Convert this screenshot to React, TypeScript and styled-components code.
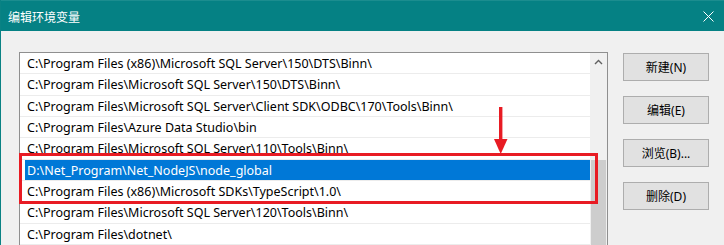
import React from "react";
import styled, { createGlobalStyle } from "styled-components";

const Global = createGlobalStyle`
  html, body { margin: 0; padding: 0; background: #f0f0f0; }
  body { width: 724px; height: 245px; overflow: hidden; }
`;

const FONT = `"Noto Sans", "Noto Sans CJK SC", sans-serif`;

const Window = styled.div`
  width: 724px;
  height: 245px;
  display: flex;
  flex-direction: column;
  background: #f0f0f0;
  border-left: 1px solid #0a8284;
  box-sizing: border-box;
  overflow: hidden;
  font-family: ${FONT};
`;

const TitleBar = styled.div`
  height: 31px;
  flex: none;
  display: flex;
  align-items: center;
  justify-content: space-between;
  background: #058184;
  border-top: 1px solid #1b8d8f;
  box-sizing: border-box;
  padding: 0 10px 0 7px;
  color: #ffffff;
  font-family: "Noto Sans CJK SC", sans-serif;
  font-size: 12px;
`;

const Body = styled.div`
  flex: 1;
  display: flex;
  align-items: flex-start;
  gap: 15px;
  padding: 21px 0 0 18px;
  min-height: 0;
`;

const ListBox = styled.div`
  position: relative;
  width: 589px;
  height: 240px;
  flex: none;
  display: flex;
  background: #ffffff;
  border: 1px solid #8f8f8f;
  box-sizing: border-box;
`;

const Rows = styled.div`
  flex: 1;
  display: flex;
  flex-direction: column;
`;

const Row = styled.div`
  height: 21.33px;
  flex: none;
  display: flex;
  box-sizing: border-box;
  border-bottom: 1px solid #ececec;
`;

const Cell = styled.div<{ $selected?: boolean }>`
  flex: 1;
  margin-left: 5px;
  padding: 1px 0 0 2px;
  box-sizing: border-box;
  height: 20px;
  line-height: 19px;
  font-size: 12.5px;
  white-space: nowrap;
  color: ${(p) => (p.$selected ? "#ffffff" : "#000000")};
  background: ${(p) => (p.$selected ? "#0078d7" : "transparent")};
`;

const ScrollBar = styled.div`
  width: 17px;
  flex: none;
  display: flex;
  flex-direction: column;
  align-items: center;
  background: #f0f0f0;
`;

const ScrollArrow = styled.div`
  height: 17px;
  flex: none;
  display: flex;
  align-items: center;
  justify-content: center;
`;

const ScrollSpacer = styled.div`
  height: 90px;
  flex: none;
`;

const Thumb = styled.div`
  width: 15px;
  flex: 1;
  background: #cdcdcd;
`;

const Highlight = styled.div`
  position: absolute;
  left: -1px;
  top: 100px;
  width: 579px;
  height: 51px;
  border: 3px solid #e81b23;
  box-sizing: border-box;
  pointer-events: none;
`;

const Arrow = styled.svg`
  position: absolute;
  left: 473px;
  top: 54px;
`;

const Buttons = styled.div`
  display: flex;
  flex-direction: column;
  gap: 15px;
  margin-top: 1px;
`;

const Button = styled.button`
  width: 86px;
  height: 28px;
  padding: 0;
  background: #e1e1e1;
  border: 1px solid #adadad;
  box-sizing: border-box;
  font-family: ${FONT};
  font-size: 12px;
  color: #000000;
`;

const paths = [
  "C:\\Program Files (x86)\\Microsoft SQL Server\\150\\DTS\\Binn\\",
  "C:\\Program Files\\Microsoft SQL Server\\150\\DTS\\Binn\\",
  "C:\\Program Files\\Microsoft SQL Server\\Client SDK\\ODBC\\170\\Tools\\Binn\\",
  "C:\\Program Files\\Azure Data Studio\\bin",
  "C:\\Program Files\\Microsoft SQL Server\\110\\Tools\\Binn\\",
  "D:\\Net_Program\\Net_NodeJS\\node_global",
  "C:\\Program Files (x86)\\Microsoft SDKs\\TypeScript\\1.0\\",
  "C:\\Program Files\\Microsoft SQL Server\\120\\Tools\\Binn\\",
  "C:\\Program Files\\dotnet\\",
];

export default function App() {
  return (
    <>
      <Global />
      <Window>
        <TitleBar>
          <span>编辑环境变量</span>
          <svg width="11" height="11" viewBox="0 0 11 11">
            <path d="M0.5 0.5 L10.5 10.5 M10.5 0.5 L0.5 10.5" stroke="#ffffff" strokeWidth="1" />
          </svg>
        </TitleBar>
        <Body>
          <ListBox>
            <Rows>
              {paths.map((p, i) => (
                <Row key={i}>
                  <Cell $selected={i === 5}>{p}</Cell>
                </Row>
              ))}
            </Rows>
            <ScrollBar>
              <ScrollArrow>
                <svg width="9" height="6" viewBox="0 0 9 6">
                  <path d="M1 5 L4.5 1.5 L8 5" fill="none" stroke="#606060" strokeWidth="1.4" />
                </svg>
              </ScrollArrow>
              <ScrollSpacer />
              <Thumb />
            </ScrollBar>
            <Highlight />
            <Arrow width="16" height="48" viewBox="0 0 16 48">
              <rect x="6" y="0" width="3.4" height="36" fill="#e81b23" />
              <path d="M1 32 L14.5 32 L7.7 47 Z" fill="#e81b23" />
            </Arrow>
          </ListBox>
          <Buttons>
            <Button>新建(N)</Button>
            <Button>编辑(E)</Button>
            <Button>浏览(B)...</Button>
            <Button>删除(D)</Button>
          </Buttons>
        </Body>
      </Window>
    </>
  );
}
